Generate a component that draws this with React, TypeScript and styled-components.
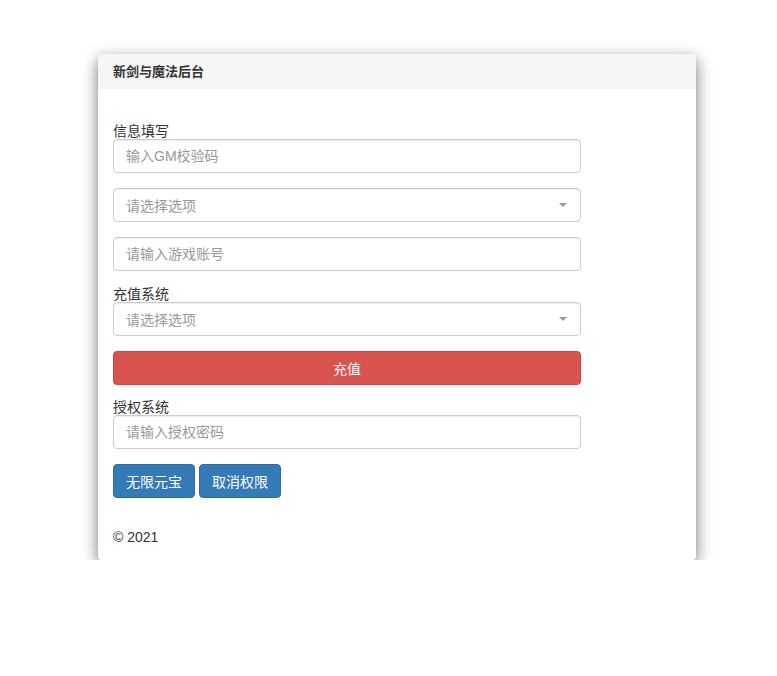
import styled, { createGlobalStyle } from 'styled-components';

const GlobalStyle = createGlobalStyle`
  body {
    margin: 0;
    background: #fff;
    font-family: "Liberation Sans", Arial, "Noto Sans CJK SC", sans-serif;
    font-size: 14px;
    color: #333;
  }
`;

export default function App(): JSX.Element {
  return (
    <Page>
      <GlobalStyle />
      <Panel>
        <Heading>新剑与魔法后台</Heading>
        <Body>
          <Group>
            <Label>信息填写</Label>
            <Input placeholder='输入GM校验码' />
          </Group>
          <Group>
            <Select>
              <span>请选择选项</span>
              <Caret />
            </Select>
          </Group>
          <Group>
            <Input placeholder='请输入游戏账号' />
          </Group>
          <Group>
            <Label>充值系统</Label>
            <Select>
              <span>请选择选项</span>
              <Caret />
            </Select>
          </Group>
          <Group $tight>
            <Button $variant='danger' $block>充值</Button>
          </Group>
          <Group>
            <Label>授权系统</Label>
            <Input placeholder='请输入授权密码' />
          </Group>
          <ButtonRow>
            <Button $variant='primary'>无限元宝</Button>
            <Button $variant='primary'>取消权限</Button>
          </ButtonRow>
          <Footer>© 2021</Footer>
        </Body>
      </Panel>
    </Page>
  );
}

const Page = styled.div`
  padding: 54px 0 0 98px;
`;

const Panel = styled.div`
  width: 598px;
  background: #fff;
  border-radius: 4px;
  box-shadow: 0 5px 15px rgba(0, 0, 0, 0.55);
  overflow: hidden;
`;

const Heading = styled.div`
  background: #f5f5f5;
  height: 35px;
  line-height: 35px;
  padding: 0 15px;
  font-weight: bold;
  font-size: 13px;
  color: #333;
`;

const Body = styled.div`
  padding: 34px 115px 15px 15px;
`;

const Group = styled.div<{ $tight?: boolean }>`
  margin-bottom: ${(p) => (p.$tight ? '14px' : '15px')};
`;

const Label = styled.div`
  line-height: 16px;
  font-size: 14px;
  color: #333;
`;

const Input = styled.input`
  display: block;
  box-sizing: border-box;
  width: 100%;
  height: 34px;
  padding: 6px 12px;
  font-family: inherit;
  font-size: 14px;
  color: #555;
  background: #fff;
  border: 1px solid #ccc;
  border-radius: 4px;
  box-shadow: inset 0 1px 1px rgba(0, 0, 0, 0.075);
  outline: none;

  &::placeholder {
    color: #999;
  }
`;

const Select = styled.div`
  display: flex;
  align-items: center;
  justify-content: space-between;
  box-sizing: border-box;
  height: 34px;
  padding: 0 12px;
  color: #999;
  border: 1px solid #ccc;
  border-radius: 4px;
  box-shadow: inset 0 1px 1px rgba(0, 0, 0, 0.075);
`;

const Caret = styled.span`
  width: 0;
  height: 0;
  margin-right: 1px;
  border-left: 4px solid transparent;
  border-right: 4px solid transparent;
  border-top: 4px solid #999;
`;

const Button = styled.button<{ $variant: 'danger' | 'primary'; $block?: boolean }>`
  display: ${(p) => (p.$block ? 'block' : 'inline-block')};
  width: ${(p) => (p.$block ? '100%' : 'auto')};
  box-sizing: border-box;
  height: 34px;
  padding: 6px 12px;
  font-family: inherit;
  font-size: 14px;
  color: #fff;
  border-radius: 4px;
  cursor: pointer;
  background: ${(p) => (p.$variant === 'danger' ? '#d9534f' : '#337ab7')};
  border: 1px solid ${(p) => (p.$variant === 'danger' ? '#d43f3a' : '#2e6da4')};
`;

const ButtonRow = styled.div`
  display: flex;
  gap: 4px;
`;

const Footer = styled.div`
  margin-top: 31px;
  line-height: 16px;
`;
